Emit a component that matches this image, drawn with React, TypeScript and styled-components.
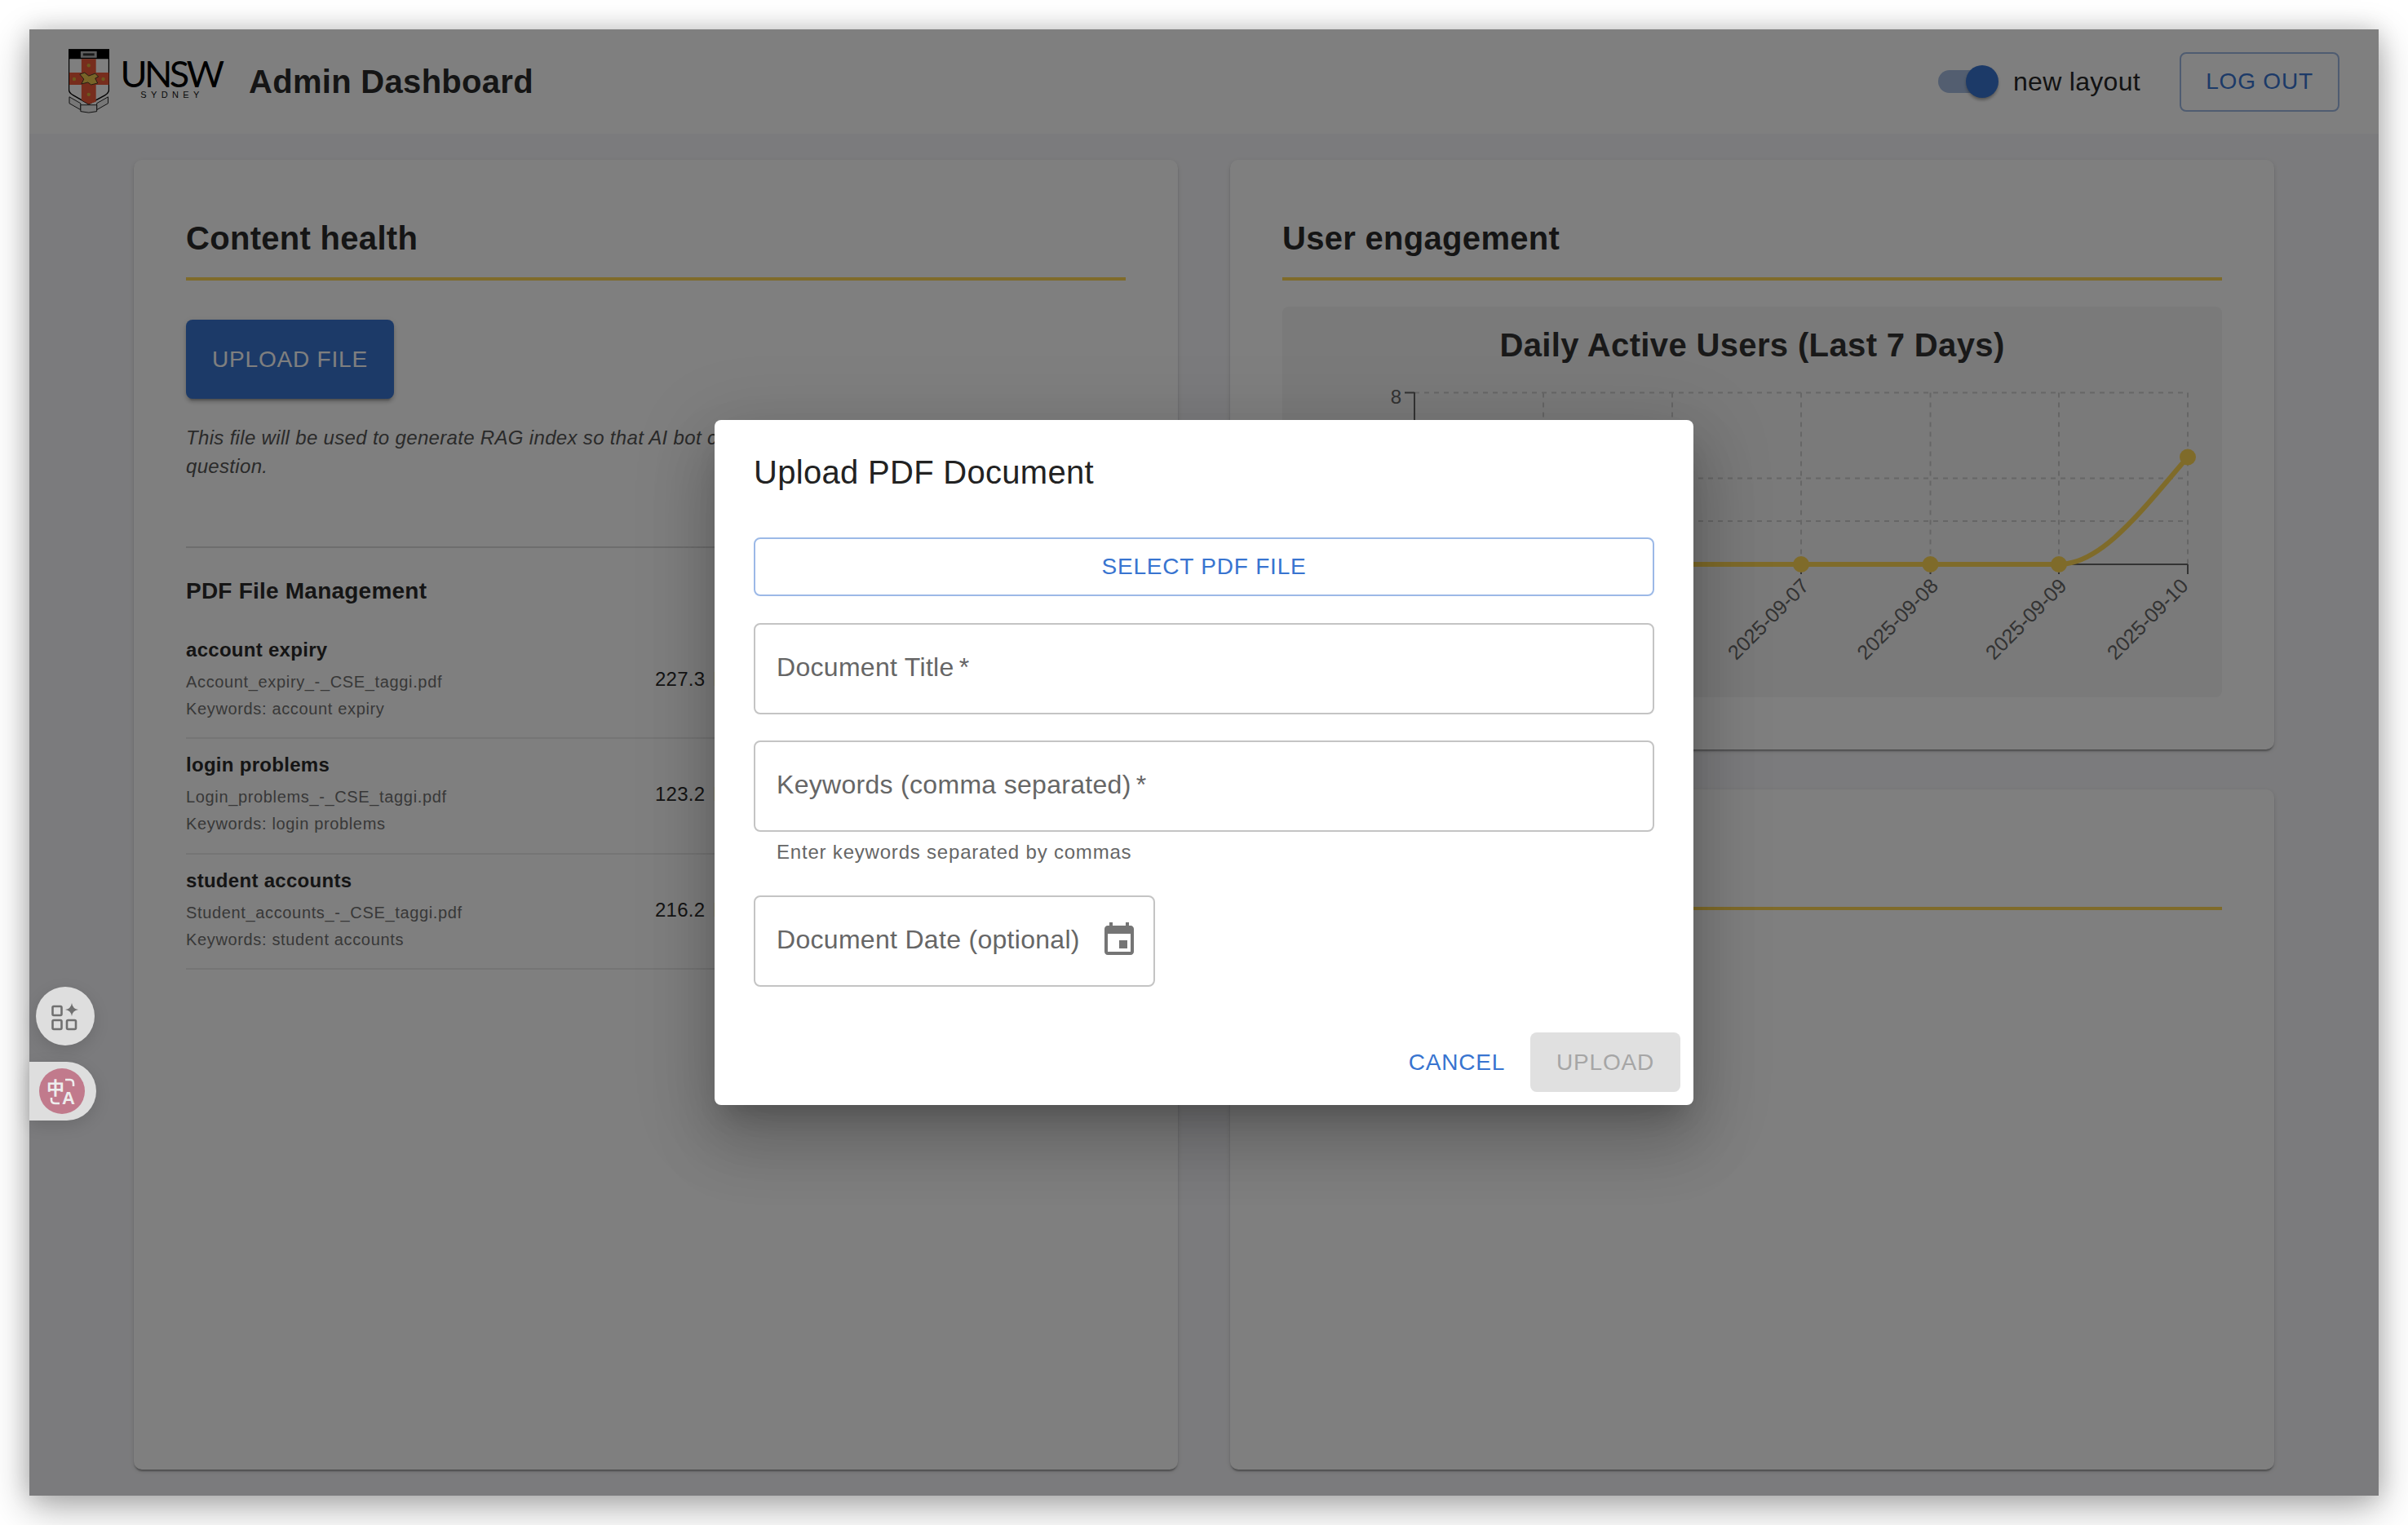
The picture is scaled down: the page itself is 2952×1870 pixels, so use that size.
import React from "react";
import styled, { createGlobalStyle } from "styled-components";

const PRIMARY = "#3874d0";
const GOLD = "#ffd655";
const FONT = `"Liberation Sans", Arial, sans-serif`;

const Global = createGlobalStyle`
  html, body { margin: 0; padding: 0; background: #fff; }
  body { font-family: ${FONT}; color: #222; }
  * { box-sizing: border-box; }
`;

const Stage = styled.div`
  width: 2952px;
  height: 1870px;
  padding: 36px;
  background: #fff;
`;
const Shell = styled.div`
  position: relative;
  width: 2880px;
  height: 1798px;
  background: #f7f7fa;
  display: flex;
  flex-direction: column;
  box-shadow: 0 14px 44px rgba(0, 0, 0, 0.32), 0 0 26px rgba(0, 0, 0, 0.14);
`;
const Header = styled.header`
  height: 128px;
  flex: none;
  background: #fff;
  display: flex;
  align-items: center;
  padding: 0 48px;
`;
const Brand = styled.div`
  width: 190px;
  height: 80px;
  flex: none;
  display: flex;
  gap: 13px;
`;
const Shield = styled.svg`
  width: 50px;
  height: 80px;
  flex: none;
  display: block;
`;
const Wordmark = styled.div`
  padding-top: 13px;
  display: flex;
  flex-direction: column;
  align-items: center;
  width: 125px;
`;
const WordmarkMain = styled.div`
  height: 34px;
  font-family: Lato, ${FONT};
  font-weight: 400;
  font-size: 45px;
  line-height: 34px;
  letter-spacing: -3.6px;
  color: #000;
  overflow: visible;
`;
const WordmarkSub = styled.div`
  margin-top: 4px;
  padding-left: 3px;
  height: 10px;
  font-size: 11px;
  line-height: 10px;
  letter-spacing: 5.4px;
  color: #111;
`;
const AppTitle = styled.h1`
  margin: 0 0 0 31px;
  font-size: 40px;
  line-height: 1.6;
  font-weight: 700;
  letter-spacing: 0.0075em;
  color: #2b2b2b;
`;
const HeaderRight = styled.div`
  margin-left: auto;
  display: flex;
  align-items: center;
`;
const Toggle = styled.div`
  position: relative;
  width: 74px;
  height: 40px;
  display: flex;
  align-items: center;
`;
const ToggleTrack = styled.span`
  width: 68px;
  height: 28px;
  border-radius: 14px;
  background: #a6bde0;
`;
const ToggleThumb = styled.span`
  position: absolute;
  right: 0;
  top: 0;
  width: 40px;
  height: 40px;
  border-radius: 50%;
  background: ${PRIMARY};
  box-shadow: 0 4px 4px -2px rgba(0, 0, 0, 0.3), 0 2px 4px rgba(0, 0, 0, 0.16);
`;
const ToggleLabel = styled.span`
  margin-left: 18px;
  font-size: 32px;
  letter-spacing: 0.00938em;
  color: #262626;
`;
const LogoutButton = styled.button`
  margin-left: 48px;
  width: 196px;
  height: 73px;
  background: transparent;
  border: 2px solid #9fb9e2;
  border-radius: 8px;
  font: 400 28px ${FONT};
  letter-spacing: 0.02857em;
  color: ${PRIMARY};
`;
const Main = styled.main`
  flex: 1;
  display: grid;
  grid-template-columns: 1280px 1280px;
  grid-template-rows: 723px 1fr;
  column-gap: 64px;
  row-gap: 49px;
  padding: 32px 128px;
`;
const Card = styled.section<{ $tall?: boolean }>`
  grid-row: ${(p) => (p.$tall ? "1 / span 2" : "auto")};
  background: #fff;
  border-radius: 10px;
  padding: 0 64px;
  box-shadow: 0 4px 2px -2px rgba(0, 0, 0, 0.2), 0 2px 2px rgba(0, 0, 0, 0.14),
    0 2px 6px rgba(0, 0, 0, 0.12);
`;
const CardTitle = styled.h2`
  margin: 0;
  height: 148px;
  padding-top: 64px;
  border-bottom: 4px solid ${GOLD};
  font-size: 40px;
  line-height: 64px;
  font-weight: 700;
  letter-spacing: 0.0075em;
  color: #2b2b2b;
`;
const UploadButton = styled.button`
  display: block;
  margin-top: 48px;
  width: 255px;
  height: 97px;
  border: 0;
  border-radius: 8px;
  background: ${PRIMARY};
  font: 400 28px ${FONT};
  letter-spacing: 0.02857em;
  color: #fff;
  box-shadow: 0 6px 2px -4px rgba(0, 0, 0, 0.2), 0 4px 4px rgba(0, 0, 0, 0.14),
    0 2px 10px rgba(0, 0, 0, 0.12);
`;
const Note = styled.p`
  margin: 30px 0 0;
  height: 70px;
  font-size: 24px;
  line-height: 35px;
  font-style: italic;
  letter-spacing: 0.0135em;
  color: #555;
`;
const Divider = styled.hr`
  margin: 81px 0 0;
  height: 2px;
  border: 0;
  background: #dcdcdc;
`;
const SectionTitle = styled.h3`
  margin: 37px 0 0;
  height: 32px;
  font-size: 28px;
  line-height: 32px;
  font-weight: 700;
  letter-spacing: 0.008em;
  color: #2b2b2b;
`;
const FileList = styled.div`
  margin-top: 23.5px;
  display: flex;
  flex-direction: column;
`;
const FileRow = styled.div`
  height: 141.5px;
  padding-top: 14px;
  border-bottom: 2px solid #eaeaea;
  display: grid;
  grid-template-columns: 575px 1fr;
`;
const FileInfo = styled.div`
  display: flex;
  flex-direction: column;
`;
const FileName = styled.div`
  height: 41px;
  font-size: 24px;
  line-height: 36px;
  font-weight: 700;
  letter-spacing: 0.012em;
  color: #2b2b2b;
`;
const FileMeta = styled.div`
  height: 33px;
  font-size: 20px;
  line-height: 33px;
  letter-spacing: 0.0325em;
  color: #707070;
`;
const FileSize = styled.div`
  padding-top: 38px;
  font-size: 24px;
  line-height: 32px;
  letter-spacing: 0.01em;
  word-spacing: 3px;
  white-space: nowrap;
  color: #2b2b2b;
`;
const ChartBox = styled.div`
  margin-top: 32px;
  height: 479px;
  padding-top: 18px;
  border-radius: 8px;
  background: #f4f4f4;
`;
const ChartTitle = styled.div`
  height: 60px;
  font-size: 40px;
  line-height: 58px;
  font-weight: 700;
  letter-spacing: 0.009em;
  text-align: center;
  color: #333;
`;
const ChartSvg = styled.svg`
  display: block;
  width: 1152px;
  height: 401px;
`;
const Backdrop = styled.div`
  position: absolute;
  inset: 0;
  background: rgba(0, 0, 0, 0.5);
  display: flex;
  align-items: center;
  justify-content: center;
`;
const Dialog = styled.div`
  width: 1200px;
  height: 840px;
  background: #fff;
  border-radius: 8px;
  display: flex;
  flex-direction: column;
  box-shadow: 0 22px 30px -14px rgba(0, 0, 0, 0.2), 0 48px 76px 6px rgba(0, 0, 0, 0.14),
    0 18px 92px 16px rgba(0, 0, 0, 0.12);
`;
const DialogTitle = styled.h2`
  margin: 0;
  padding: 32px 48px;
  font-size: 40px;
  line-height: 64px;
  font-weight: 400;
  letter-spacing: 0.0075em;
  color: #222;
`;
const DialogBody = styled.div`
  flex: 1;
  padding: 16px 48px 0;
  display: flex;
  flex-direction: column;
`;
const SelectButton = styled.button`
  height: 72px;
  flex: none;
  margin-bottom: 1px;
  background: #fff;
  border: 2px solid #9cb9e7;
  border-radius: 8px;
  font: 400 28px ${FONT};
  letter-spacing: 0.02857em;
  color: ${PRIMARY};
`;
const Field = styled.div<{ $width?: number }>`
  margin-top: 32px;
  width: ${(p) => (p.$width ? `${p.$width}px` : "100%")};
  height: 112px;
  flex: none;
  padding: 0 26px 3px 26px;
  border: 2px solid #c4c4c4;
  border-radius: 8px;
  display: flex;
  align-items: center;
  justify-content: space-between;
  font-size: 32px;
  letter-spacing: 0.00938em;
  color: #666;
`;
const Required = styled.span`
  margin-left: 6px;
`;
const Helper = styled.div`
  margin-top: 5px;
  height: 41px;
  padding-left: 28px;
  font-size: 24px;
  line-height: 40px;
  letter-spacing: 0.03333em;
  color: #666;
`;
const CalendarIcon = styled.svg`
  width: 48px;
  height: 48px;
  flex: none;
  fill: #757575;
  margin-right: -8px;
`;
const DialogActions = styled.div`
  padding: 16px;
  display: flex;
  justify-content: flex-end;
  align-items: center;
  gap: 16px;
`;
const CancelButton = styled.button`
  width: 148px;
  height: 73px;
  border: 0;
  background: transparent;
  font: 400 28px ${FONT};
  letter-spacing: 0.02857em;
  color: ${PRIMARY};
`;
const DisabledButton = styled.button`
  width: 184px;
  height: 73px;
  border: 0;
  border-radius: 8px;
  background: #e0e0e0;
  font: 400 28px ${FONT};
  letter-spacing: 0.02857em;
  color: #a6a6a6;
`;
const ToolCircle = styled.div`
  position: absolute;
  left: 8px;
  top: 1174px;
  width: 72px;
  height: 72px;
  border-radius: 50%;
  background: #dedede;
  box-shadow: 0 6px 20px rgba(0, 0, 0, 0.12);
`;
const TranslatePill = styled.div`
  position: absolute;
  left: 0;
  top: 1266px;
  width: 82px;
  height: 72px;
  border-radius: 0 36px 36px 0;
  background: #dedede;
  padding: 8px 0 0 12px;
  box-shadow: 0 6px 20px rgba(0, 0, 0, 0.12);
`;
const TranslateBadge = styled.svg`
  display: block;
  width: 56px;
  height: 56px;
`;
const WidgetIcon = styled.svg`
  display: block;
  width: 72px;
  height: 72px;
`;

const files = [
  { name: "account expiry", file: "Account_expiry_-_CSE_taggi.pdf", size: "227.3 KB" },
  { name: "login problems", file: "Login_problems_-_CSE_taggi.pdf", size: "123.2 KB" },
  { name: "student accounts", file: "Student_accounts_-_CSE_taggi.pdf", size: "216.2 KB" },
];

const Logo = () => (
  <Brand>
    <Shield viewBox="0 0 50.5 80">
      <path d="M0.5 0.5H50V50Q50 54 45 57L25 68L6 57Q0.5 54 0.5 50Z" fill="#fff" stroke="#000" strokeWidth="1.4" />
      <rect x="0" y="0" width="50.5" height="12" fill="#000" />
      <rect x="15" y="2.5" width="20" height="8" fill="#bbb" />
      <rect x="18" y="5" width="14" height="3" fill="#333" />
      <path d="M16 12H34V29H50V44H34V65L25 68L16 63V44H1V29H16Z" fill="#ef5a3a" />
      <circle cx="25" cy="20" r="2.2" fill="#d9b23c" />
      <circle cx="7" cy="37" r="2.2" fill="#d9b23c" />
      <circle cx="43" cy="37" r="2.2" fill="#d9b23c" />
      <circle cx="25" cy="56" r="2.2" fill="#d9b23c" />
      <path d="M14 31L20 29L25 33L33 30L37 34L33 36L36 42L28 44L24 41L16 43L19 37Z" fill="#f0c850" stroke="#222" strokeWidth="0.8" />
      <path d="M1 59L15 67L15 75L1 67Z" fill="#eee" stroke="#222" strokeWidth="1" />
      <path d="M49 59L35 67L35 75L49 67Z" fill="#eee" stroke="#222" strokeWidth="1" />
      <path d="M15 69H35V77Q25 80 15 77Z" fill="#eee" stroke="#222" strokeWidth="1" />
    </Shield>
    <Wordmark>
      <WordmarkMain>UNSW</WordmarkMain>
      <WordmarkSub>SYDNEY</WordmarkSub>
    </Wordmark>
  </Brand>
);

const xs = [162, 320, 478, 636, 794.5, 952, 1110];
const baseY = 238;
const dates = [
  { x: 636, off: 11, t: "2025-09-07" },
  { x: 794.5, off: 11, t: "2025-09-08" },
  { x: 952, off: 11, t: "2025-09-09" },
  { x: 1110, off: 2, t: "2025-09-10" },
];

const Chart = () => (
  <ChartSvg viewBox="0 0 1152 401">
    <g stroke="#ccc" strokeWidth="2" strokeDasharray="6 6" fill="none">
      <line x1="162" y1="27.5" x2="1110" y2="27.5" />
      <line x1="162" y1="132.5" x2="1110" y2="132.5" />
      <line x1="162" y1="185" x2="1110" y2="185" />
      {xs.slice(1).map((x) => (
        <line key={x} x1={x} y1="27.5" x2={x} y2={baseY} />
      ))}
    </g>
    <g stroke="#666" strokeWidth="2" fill="none">
      <line x1="162" y1="27" x2="162" y2={baseY} />
      <line x1="150" y1="27.5" x2="162" y2="27.5" />
      <line x1="162" y1={baseY} x2="1110" y2={baseY} />
      {xs.map((x) => (
        <line key={x} x1={x} y1={baseY} x2={x} y2={baseY + 12} />
      ))}
    </g>
    <text x="146" y="41" textAnchor="end" fontFamily={FONT} fontSize="24" fill="#666">8</text>
    {dates.map((d) => (
      <text
        key={d.t}
        x={d.x + d.off}
        y={baseY + 28}
        textAnchor="end"
        fontFamily={FONT}
        fontSize="25"
        fill="#666"
        transform={`rotate(-45 ${d.x + d.off} ${baseY + 28})`}
      >
        {d.t}
      </text>
    ))}
    <path d={`M320 ${baseY}H952C1005 ${baseY} 1055 170 1110 106.5`} fill="none" stroke={GOLD} strokeWidth="6" />
    {xs.slice(1, 6).map((x) => (
      <circle key={x} cx={x} cy={baseY} r="10" fill={GOLD} />
    ))}
    <circle cx="1110" cy="106.5" r="10" fill={GOLD} />
  </ChartSvg>
);

export default function App() {
  return (
    <Stage>
      <Global />
      <Shell>
        <Header>
          <Logo />
          <AppTitle>Admin Dashboard</AppTitle>
          <HeaderRight>
            <Toggle>
              <ToggleTrack />
              <ToggleThumb />
            </Toggle>
            <ToggleLabel>new layout</ToggleLabel>
            <LogoutButton>LOG OUT</LogoutButton>
          </HeaderRight>
        </Header>
        <Main>
          <Card $tall>
            <CardTitle>Content health</CardTitle>
            <UploadButton>UPLOAD FILE</UploadButton>
            <Note>
              This file will be used to generate RAG index so that AI bot can answer the student's
              <br />
              question.
            </Note>
            <Divider />
            <SectionTitle>PDF File Management</SectionTitle>
            <FileList>
              {files.map((f) => (
                <FileRow key={f.name}>
                  <FileInfo>
                    <FileName>{f.name}</FileName>
                    <FileMeta>{f.file}</FileMeta>
                    <FileMeta>Keywords: {f.name}</FileMeta>
                  </FileInfo>
                  <FileSize>{f.size}</FileSize>
                </FileRow>
              ))}
            </FileList>
          </Card>
          <Card>
            <CardTitle>User engagement</CardTitle>
            <ChartBox>
              <ChartTitle>Daily Active Users (Last 7 Days)</ChartTitle>
              <Chart />
            </ChartBox>
          </Card>
          <Card>
            <CardTitle />
          </Card>
        </Main>
        <Backdrop>
          <Dialog>
            <DialogTitle>Upload PDF Document</DialogTitle>
            <DialogBody>
              <SelectButton>SELECT PDF FILE</SelectButton>
              <Field>
                <span>Document Title<Required>*</Required></span>
              </Field>
              <Field>
                <span>Keywords (comma separated)<Required>*</Required></span>
              </Field>
              <Helper>Enter keywords separated by commas</Helper>
              <Field $width={492}>
                <span>Document Date (optional)</span>
                <CalendarIcon viewBox="0 0 24 24">
                  <path d="M17 12h-5v5h5v-5zM16 1v2H8V1H6v2H5c-1.11 0-1.99.9-1.99 2L3 19c0 1.1.89 2 2 2h14c1.1 0 2-.9 2-2V5c0-1.1-.9-2-2-2h-1V1h-2zm3 18H5V8h14v11z" />
                </CalendarIcon>
              </Field>
            </DialogBody>
            <DialogActions>
              <CancelButton>CANCEL</CancelButton>
              <DisabledButton disabled>UPLOAD</DisabledButton>
            </DialogActions>
          </Dialog>
        </Backdrop>
        <ToolCircle>
          <WidgetIcon viewBox="0 0 72 72">
            <g fill="none" stroke="#707070" strokeWidth="2.6">
              <rect x="20.5" y="24" width="11" height="11" rx="1.5" />
              <rect x="20.5" y="41" width="11" height="11" rx="1.5" />
              <rect x="38" y="41" width="11" height="11" rx="1.5" />
            </g>
            <path d="M44 20Q45 27 52 28Q45 29 44 36Q43 29 36 28Q43 27 44 20Z" fill="#707070" />
          </WidgetIcon>
        </ToolCircle>
        <TranslatePill>
          <TranslateBadge viewBox="0 0 56 56">
            <circle cx="28" cy="28" r="28" fill="#c17a8c" />
            <text x="20" y="32" textAnchor="middle" fontFamily={`"Noto Sans CJK SC", sans-serif`} fontSize="22" fontWeight="700" fill="#ededed">中</text>
            <text x="36" y="44" textAnchor="middle" fontFamily={FONT} fontSize="22" fontWeight="700" fill="#ededed">A</text>
            <path d="M32 14H38Q42 14 42 19V22" fill="none" stroke="#ededed" strokeWidth="2.6" />
            <path d="M15 36V39Q15 43 20 43H25" fill="none" stroke="#ededed" strokeWidth="2.6" />
          </TranslateBadge>
        </TranslatePill>
      </Shell>
    </Stage>
  );
}
